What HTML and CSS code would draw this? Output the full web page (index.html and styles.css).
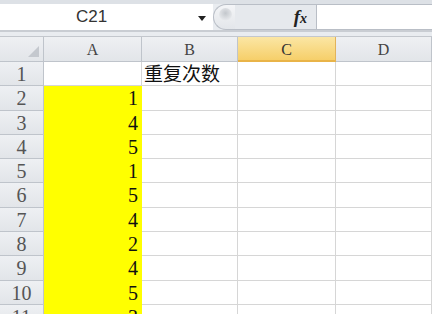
FILE: index.html
```html
<!DOCTYPE html>
<html lang="zh-CN">
<head>
<meta charset="UTF-8">
<title>重复次数</title>
<link rel="stylesheet" href="styles.css">
</head>
<body>
<div class="bar">
    <div class="namebox">
        <span class="ref">C21</span>
        <span class="arrow"></span>
    </div>
    <div class="fxbar">
        <div class="grip"><span class="knob"></span></div>
        <div class="fx"><i>f<span>x</span></i></div>
        <div class="input"></div>
    </div>
</div>
<div class="sheet">
    <div class="corner"><span class="tri"></span></div>
    <div class="col">A</div>
    <div class="col">B</div>
    <div class="col sel">C</div>
    <div class="col">D</div>

    <div class="row">1</div>
    <div class="cell"></div>
    <div class="cell txt">重复次数</div>
    <div class="cell top"></div>
    <div class="cell"></div>

    <div class="row">2</div><div class="cell num">1</div><div class="cell"></div><div class="cell"></div><div class="cell"></div>
    <div class="row">3</div><div class="cell num">4</div><div class="cell"></div><div class="cell"></div><div class="cell"></div>
    <div class="row">4</div><div class="cell num">5</div><div class="cell"></div><div class="cell"></div><div class="cell"></div>
    <div class="row">5</div><div class="cell num">1</div><div class="cell"></div><div class="cell"></div><div class="cell"></div>
    <div class="row">6</div><div class="cell num">5</div><div class="cell"></div><div class="cell"></div><div class="cell"></div>
    <div class="row">7</div><div class="cell num">4</div><div class="cell"></div><div class="cell"></div><div class="cell"></div>
    <div class="row">8</div><div class="cell num">2</div><div class="cell"></div><div class="cell"></div><div class="cell"></div>
    <div class="row">9</div><div class="cell num">4</div><div class="cell"></div><div class="cell"></div><div class="cell"></div>
    <div class="row">10</div><div class="cell num">5</div><div class="cell"></div><div class="cell"></div><div class="cell"></div>
    <div class="row">11</div><div class="cell num">3</div><div class="cell"></div><div class="cell"></div><div class="cell"></div>
</div>
</body>
</html>
```

FILE: styles.css
```css
body {
    margin: 0;
    width: 432px;
    height: 314px;
    overflow: hidden;
    background-color: #e9ecf0;
    font-family: "Liberation Serif", "Noto Sans CJK SC", serif;
}

/* name box + formula bar */
.bar {
    display: flex;
    height: 36px;
    padding-top: 4px;
    box-sizing: border-box;
    background: linear-gradient(#dde1e6 0, #dde1e6 4px, #e9ecf0 4px);
}

.namebox {
    width: 213px;
    height: 26px;
    background-color: #fff;
    border-bottom: 2px solid #c9cdd3;
    display: flex;
    align-items: center;
    position: relative;
}

.ref {
    font-family: "Liberation Sans", sans-serif;
    font-size: 17px;
    color: #333;
    margin-left: 76px;
}

.arrow {
    position: absolute;
    left: 198px;
    top: 12px;
    border-left: 4px solid transparent;
    border-right: 4px solid transparent;
    border-top: 5px solid #222;
}

.fxbar {
    flex: 1;
    display: flex;
    height: 26px;
    border-bottom: 2px solid #c9cdd3;
}

.grip {
    width: 22px;
    height: 26px;
    box-sizing: border-box;
    border: 1px solid #b9bec6;
    border-right: none;
    border-radius: 13px 0 0 13px;
    background: linear-gradient(#f4f5f7, #e3e6ea);
    position: relative;
}

.knob {
    position: absolute;
    left: 5px;
    top: 3px;
    width: 13px;
    height: 13px;
    border-radius: 50%;
    background: radial-gradient(circle at 50% 40%, #c3c7cc, #e9ebee 75%);
}

.fx {
    width: 81px;
    height: 26px;
    box-sizing: border-box;
    border-top: 1px solid #b9bec6;
    border-bottom: 1px solid #b9bec6;
    background-color: #e6e9ed;
    text-align: right;
    padding-right: 9px;
    font-size: 19px;
    line-height: 23px;
    color: #222;
}

.fx i {
    font-weight: bold;
}

.fx span {
    font-size: 14px;
}

.input {
    flex: 1;
    height: 26px;
    box-sizing: border-box;
    border: 1px solid #b9bec6;
    border-right: none;
    background-color: #fff;
}

/* grid */
.sheet {
    display: grid;
    grid-template-columns: 44px 98px 96px 98px 1fr;
    grid-template-rows: 25px repeat(11, 24.3px);
    background-color: #fff;
    border-top: 1px solid #c3c7cd;
}

.corner,
.col,
.row {
    background: linear-gradient(#eef0f3, #e2e5e9);
    border-right: 1px solid #bfc4cb;
    border-bottom: 1px solid #bfc4cb;
    box-sizing: border-box;
    color: #444;
}

.corner {
    position: relative;
}

.tri {
    position: absolute;
    right: 4px;
    bottom: 4px;
    border-left: 11px solid transparent;
    border-bottom: 11px solid #c4c8ce;
}

.col {
    text-align: center;
    font-size: 16px;
    line-height: 25px;
}

.col.sel {
    background: linear-gradient(#fbe6a4, #f6cf6a);
    border-bottom: 2px solid #e9b448;
    border-right-color: #e2b35a;
    color: #333;
}

.row {
    text-align: center;
    font-size: 20px;
    line-height: 24px;
    color: #555;
    overflow: hidden;
}

.cell {
    border-right: 1px solid #d6d6d6;
    border-bottom: 1px solid #d6d6d6;
    box-sizing: border-box;
    overflow: visible;
    white-space: nowrap;
}

.num {
    background-color: #ffff00;
    border-color: #ffff00;
    text-align: right;
    padding-right: 3px;
    font-size: 20px;
    line-height: 24px;
    color: #111;
}

.txt {
    font-family: "Noto Sans CJK SC", sans-serif;
    font-size: 19px;
    line-height: 22px;
    padding-left: 2px;
    color: #111;
}
```
